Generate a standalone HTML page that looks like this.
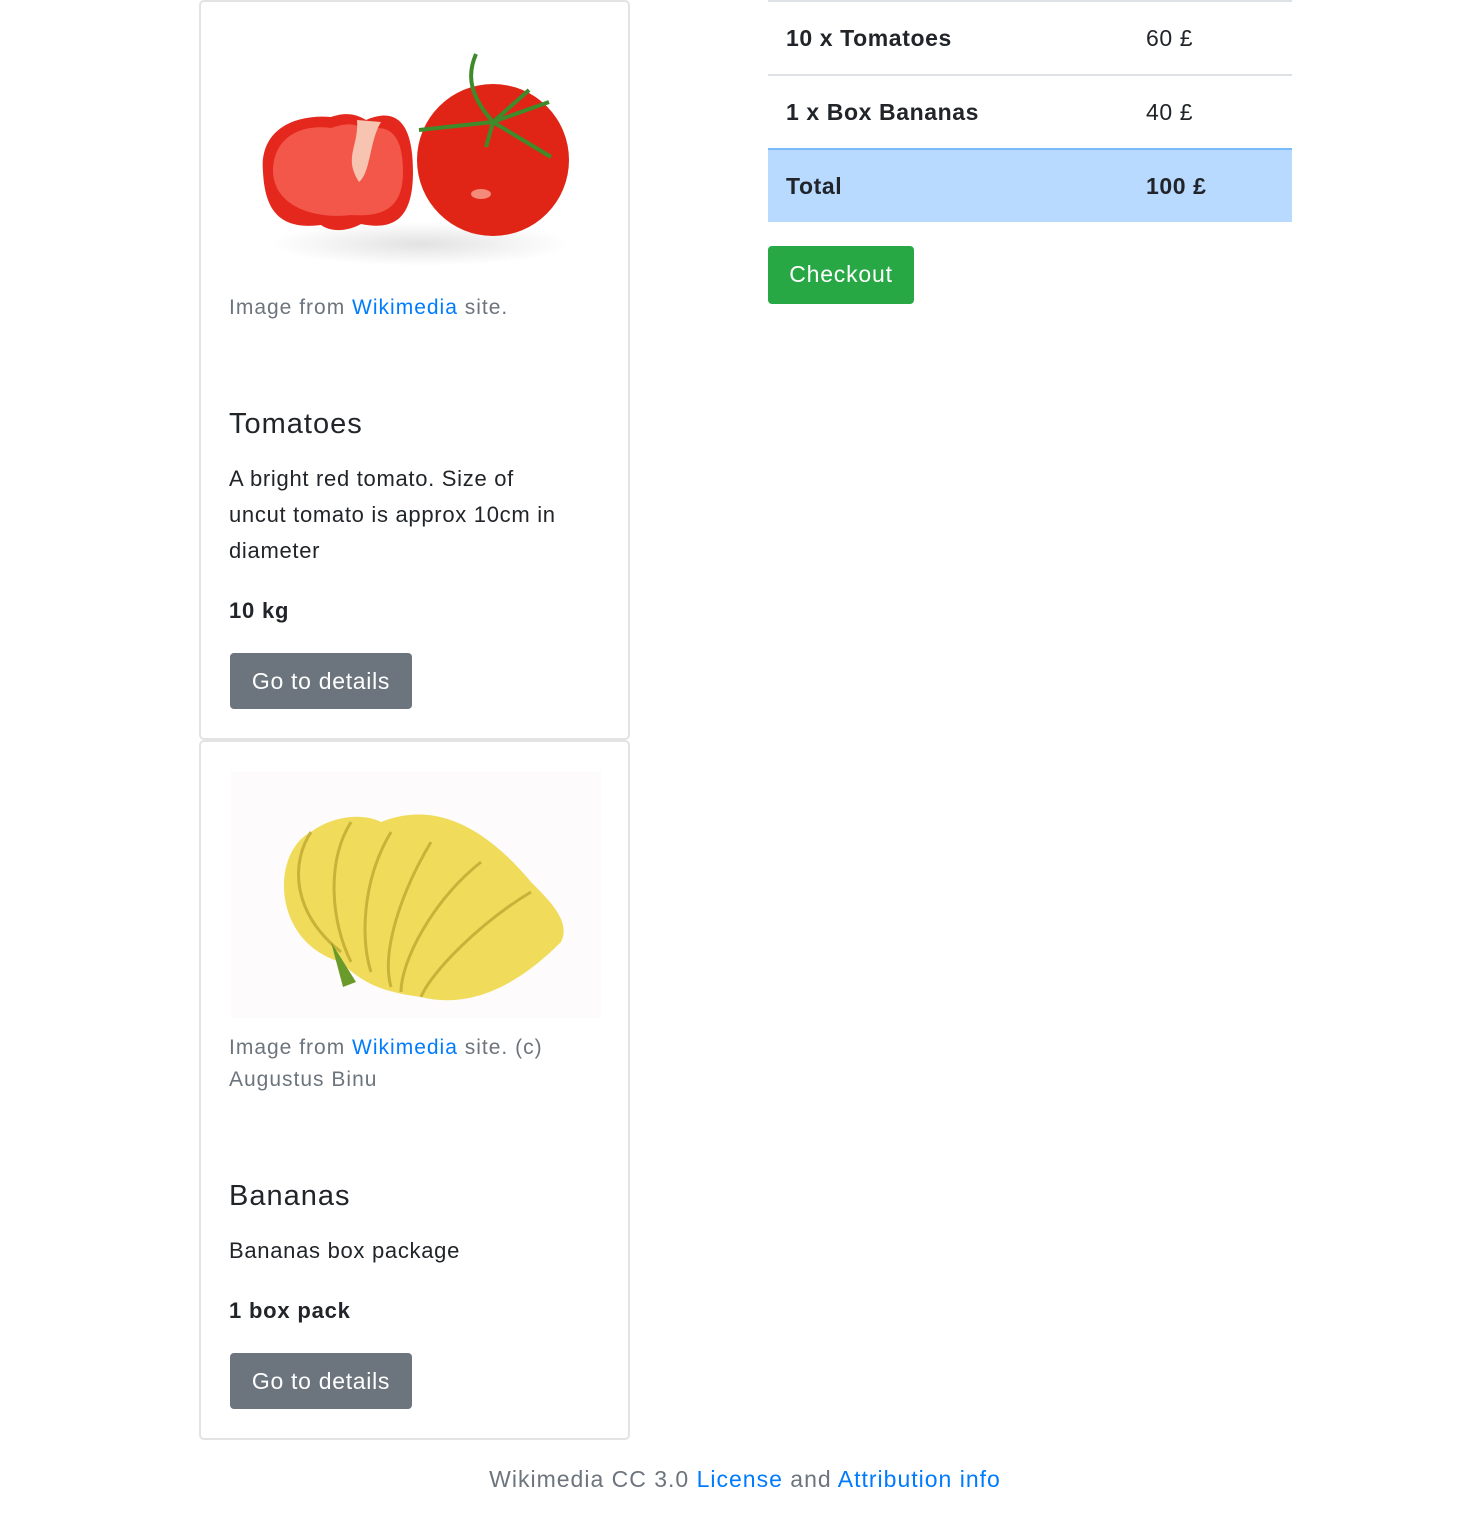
<!DOCTYPE html>
<html><head><meta charset="utf-8"><style>
*{box-sizing:border-box;margin:0;padding:0}
body{width:1458px;height:1538px;background:#fff;font-family:"Liberation Sans",sans-serif;color:#212529;font-size:20px;position:relative;overflow:hidden}
.card{position:absolute;left:199px;width:431px;border:2px solid #e3e3e3;border-radius:5px;background:#fff}
.img{position:absolute;left:30px;width:370px}
.cap{position:absolute;left:28px;color:#6c757d;font-size:21px;letter-spacing:1px;line-height:32px;width:380px}
a{color:#007bff;text-decoration:none}
h5{position:absolute;left:28px;font-size:29px;letter-spacing:1px;font-weight:normal}
.desc{position:absolute;left:28px;line-height:36px;width:390px;font-size:22px;letter-spacing:0.7px;white-space:nowrap}
.qty{position:absolute;left:28px;font-weight:bold;font-size:22px;letter-spacing:0.8px}
.btn{position:absolute;left:29px;width:182px;height:56px;background:#6c757d;color:#fff;border-radius:4px;font-size:23px;letter-spacing:0.7px;line-height:56px;text-align:center}
table{position:absolute;left:768px;top:0;width:524px;border-collapse:collapse;font-size:23px;letter-spacing:0.6px}
td{height:74px;border-top:2px solid #dee2e6;padding-left:18px}
td.p{width:146px;padding-left:0}
tr.t td{background:#b8daff;border-top:2px solid #7abaff;height:73px}
.co{position:absolute;left:768px;top:246px;width:146px;height:58px;background:#28a745;color:#fff;border-radius:4px;font-size:23px;letter-spacing:0.8px;line-height:56px;text-align:center}
.foot{position:absolute;top:1466px;left:0;width:1490px;text-align:center;color:#6c757d;font-size:23px;letter-spacing:1px}
</style></head><body>
<div class="card" style="top:0;height:740px">
<svg class="img" style="top:20px" width="370" height="258" viewBox="0 0 370 258">
<defs><radialGradient id="sh"><stop offset="0" stop-color="#e2e2e2"/><stop offset="1" stop-color="#fff"/></radialGradient></defs>
<ellipse cx="190" cy="222" rx="150" ry="22" fill="url(#sh)"/>
<path d="M32 150 C28 110 60 92 100 95 C115 90 125 92 135 98 C165 85 182 100 182 150 C182 200 160 208 130 202 C115 210 100 210 90 203 C50 208 34 190 32 150Z" fill="#e5281d"/>
<path d="M42 150 C42 115 70 102 100 106 C118 100 125 102 135 108 C162 100 172 118 172 150 C172 188 150 195 120 193 C90 197 44 188 42 150Z" fill="#f2574a"/>
<path d="M126 98 C128 125 112 135 128 160 C140 150 138 120 150 100Z" fill="#f6c4b0"/>
<circle cx="262" cy="138" r="76" fill="#e02517"/>
<ellipse cx="250" cy="172" rx="10" ry="5" fill="#f48a7a"/>
<path d="M245 32 C235 55 240 75 262 100 M262 100 L188 108 M262 100 L298 68 M262 100 L318 80 M262 100 L320 135 M262 100 L255 125" stroke="#3f8a2a" stroke-width="4" fill="none"/>
</svg>
<div class="cap" style="top:290px">Image from <a>Wikimedia</a> site.</div>
<h5 style="top:406px">Tomatoes</h5>
<div class="desc" style="top:459px">A bright red tomato. Size of<br>uncut tomato is approx 10cm in<br>diameter</div>
<div class="qty" style="top:596px">10 kg</div>
<div class="btn" style="top:651px">Go to details</div>
</div>
<div class="card" style="top:740px;height:700px">
<svg class="img" style="top:30px;background:#fdfbfb" width="370" height="246" viewBox="0 0 370 246">
<path d="M110 190 C40 170 40 80 80 60 C100 45 130 40 150 50 C200 30 250 50 300 110 C320 130 340 150 330 170 C300 200 250 240 190 225 C150 220 130 210 110 190Z" fill="#f0dc5a"/>
<path d="M80 60 C60 90 60 140 110 180 M120 50 C95 90 100 150 120 190 M160 60 C130 110 130 170 140 200 M200 70 C170 120 150 180 160 215 M250 90 C200 130 170 190 170 220 M300 120 C250 150 200 200 190 225" stroke="#c9b23a" stroke-width="3" fill="none"/>
<path d="M100 170 L125 210 L112 215Z" fill="#6a9a2a"/>
</svg>
<div class="cap" style="top:290px">Image from <a>Wikimedia</a> site. (c)<br>Augustus Binu</div>
<h5 style="top:438px">Bananas</h5>
<div class="desc" style="top:491px">Bananas box package</div>
<div class="qty" style="top:556px">1 box pack</div>
<div class="btn" style="top:611px">Go to details</div>
</div>
<table>
<tr><td><b>10 x Tomatoes</b></td><td class="p">60 £</td></tr>
<tr><td><b>1 x Box Bananas</b></td><td class="p">40 £</td></tr>
<tr class="t"><td><b>Total</b></td><td class="p"><b>100 £</b></td></tr>
</table>
<div class="co">Checkout</div>
<div class="foot">Wikimedia CC 3.0 <a>License</a> and <a>Attribution info</a></div>
</body></html>
